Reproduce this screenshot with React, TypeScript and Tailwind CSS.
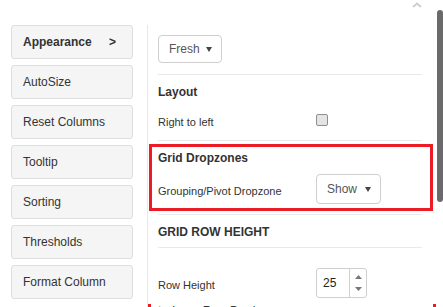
import type { ReactNode } from 'react'

// ------------------------------------------------------------
//  Menu lateral
// ------------------------------------------------------------

const menu = ['Appearance', 'AutoSize', 'Reset Columns', 'Tooltip', 'Sorting', 'Thresholds', 'Format Column']

function MenuButton({ label, active }: { label: string; active?: boolean }) {
  return (
    <div className="h-[34px] shrink-0 flex items-center justify-between pl-[11px] pr-[16px] rounded-[3px] border border-[#dedede] bg-[#f5f5f5] text-[12px] text-[#333]">
      <span className={active ? 'font-bold' : ''}>{label}</span>
      {active && <span className="font-bold">&gt;</span>}
    </div>
  )
}

function Select({ value, width }: { value: string; width: string }) {
  return (
    <div className={`${width} h-[30px] flex items-center justify-between pl-[10px] pr-[9px] rounded-[4px] border border-[#cfcfcf] bg-white text-[12px] text-[#555]`}>
      <span>{value}</span>
      <svg width="6" height="5" viewBox="0 0 6 5">
        <polygon points="0,0 6,0 3,5" fill="#444" />
      </svg>
    </div>
  )
}

function Section({ height, title, children }: { height: string; title: string; children?: ReactNode }) {
  return (
    <div className={`${height} shrink-0 border-t border-[#e9e9e9] w-[264px]`}>
      <div className="mt-[9px] h-[16px] leading-[16px] text-[12px] font-bold text-[#333]">{title}</div>
      {children}
    </div>
  )
}

export default function App() {
  return (
    <div className="relative w-[443px] h-[307px] overflow-hidden bg-white" style={{ fontFamily: '"Liberation Sans", Arial, sans-serif' }}>
      <div className="flex h-full">
        {/* Menu */}
        <div className="ml-[11px] w-[122px] pt-[25px] flex flex-col gap-[6px]">
          {menu.map((m, i) => (
            <MenuButton key={m} label={m} active={i === 0} />
          ))}
        </div>

        {/* Divisor */}
        <div className="ml-[14px] mt-[25px] w-px bg-[#e8e8e8]" />

        {/* Conteúdo */}
        <div className="pl-[10px] pt-[35px] flex flex-col">
          <Select value="Fresh" width="w-[64px]" />

          <div className="mt-[11px] flex flex-col">
            <Section height="h-[66px]" title="Layout">
              <div className="mt-[8px] h-[24px] flex items-center text-[11px] text-[#333]">
                <span className="w-[158px] pt-[5px]">Right to left</span>
                <div className="w-[12px] h-[12px] rounded-[2px] border border-[#8f8f8f] bg-[#e4e4e4]" />
              </div>
            </Section>

            <Section height="h-[74px]" title="Grid Dropzones">
              <div className="mt-[8px] h-[30px] flex items-center text-[11px] text-[#333]">
                <span className="w-[158px] pt-[5px]">Grouping/Pivot Dropzone</span>
                <Select value="Show" width="w-[65px]" />
              </div>
            </Section>

            <Section height="h-[33px]" title="GRID ROW HEIGHT" />

            <div className="border-t border-[#e9e9e9] w-[264px] h-[60px]">
              <div className="mt-[20px] h-[30px] flex items-center text-[11px] text-[#333]">
                <span className="w-[158px] pt-[5px]">Row Height</span>
                <div className="w-[51px] h-[30px] flex rounded-[3px] border border-[#cfcfcf] bg-white">
                  <span className="flex-1 flex items-center pl-[6px] text-[12px] text-[#222]">25</span>
                  <div className="w-[17px] border-l border-[#cfcfcf] flex flex-col items-center justify-center gap-[8px]">
                    <svg width="7" height="4" viewBox="0 0 7 4">
                      <polygon points="0,4 7,4 3.5,0" fill="#777" />
                    </svg>
                    <svg width="7" height="4" viewBox="0 0 7 4">
                      <polygon points="0,0 7,0 3.5,4" fill="#777" />
                    </svg>
                  </div>
                </div>
              </div>
              <div className="mt-[5px] h-[16px] flex items-center text-[12px] text-[#333]">
                <span className="w-[14px] text-[#999]">|</span>
                <span className="w-[125px]">Inner Row Borders</span>
                <span className="text-[8px]">▼</span>
              </div>
            </div>
          </div>
        </div>
      </div>

      {/* Destaque vermelho */}
      <div className="absolute left-[149px] top-[144px] w-[284px] h-[67px] border-[3px] border-[#ec1c24]" />
      <div className="absolute left-[148px] top-[304px] w-[288px] h-[10px] border-x-[3px] border-[#ec1c24]" />

      {/* Barra de rolagem */}
      <svg className="absolute left-[412px] top-[2px]" width="10" height="6" viewBox="0 0 10 6">
        <polyline points="1,5 5,1.5 9,5" fill="none" stroke="#cfcfcf" strokeWidth="2" />
      </svg>
      <div className="absolute left-[437px] top-[10px] w-[6px] h-[192px] rounded-[3px] bg-[#6a6a6a]" />
    </div>
  )
}
